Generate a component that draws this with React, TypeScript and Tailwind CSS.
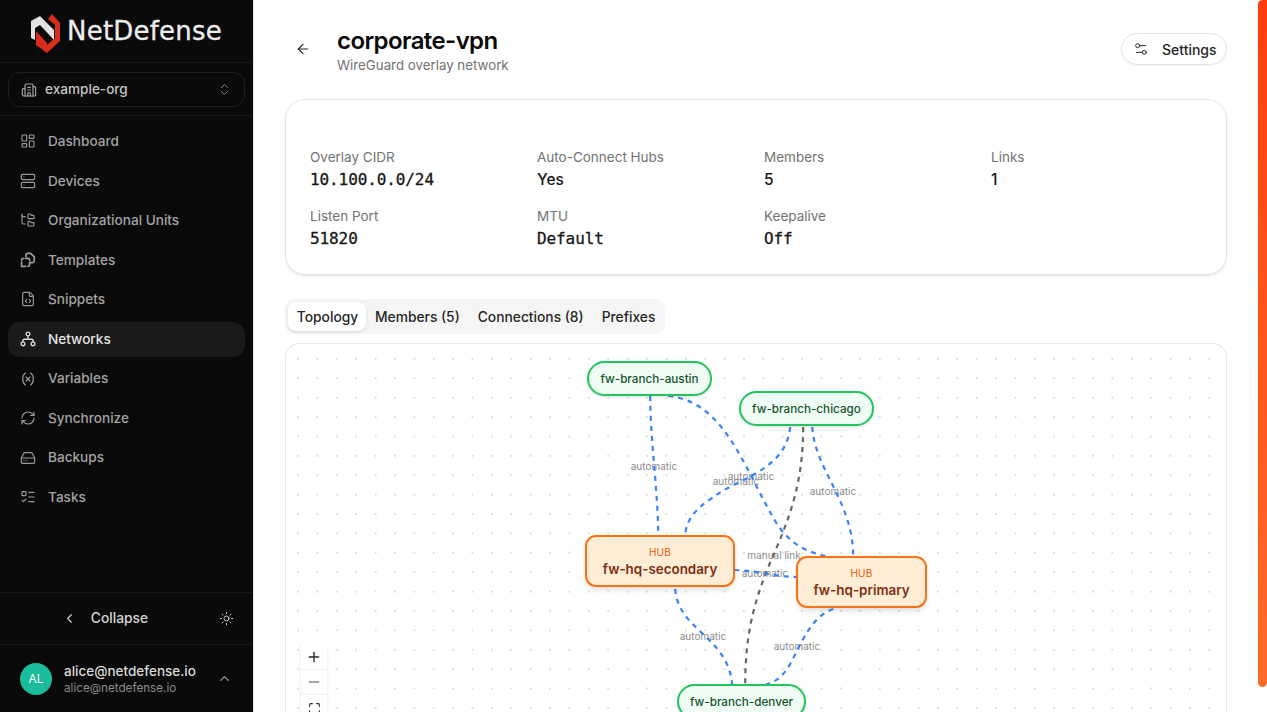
import React from "react";
import {
  ArrowLeft, Building2, ChevronLeft, ChevronUp, ChevronsUpDown, FileCode, FolderTree, HardDrive,
  LayoutDashboard, ListTodo, Maximize, Minus, Plus, RefreshCw, Server, Settings2, Sun, Variable,
} from "lucide-react";

function TemplatesIcon({ size, strokeWidth, className }: { size: number; strokeWidth: number; className?: string }) {
  return (
    <svg width={size} height={size} viewBox="0 0 16 16" fill="none" stroke="currentColor" strokeWidth={strokeWidth} strokeLinecap="round" strokeLinejoin="round" className={className}>
      <path d="M6 4.5V3a1.6 1.6 0 0 1 1.6-1.6h3l3.6 3.4V9a1.6 1.6 0 0 1-1.6 1.6h-2" />
      <path d="M1.6 8A1.6 1.6 0 0 1 3.2 6.4M5.2 6.4H8a1.6 1.6 0 0 1 1.6 1.6M9.6 10v2.8a1.6 1.6 0 0 1-1.6 1.6M1.6 10v4.4h4" />
    </svg>
  );
}

function NetworkIcon({ size, className }: { size: number; strokeWidth: number; className?: string }) {
  return (
    <svg width={size} height={size} viewBox="0 0 16 16" fill="none" stroke="currentColor" strokeWidth={1.4} strokeLinecap="round" strokeLinejoin="round" className={className}>
      <circle cx="8" cy="3" r="1.9" />
      <circle cx="3" cy="12.8" r="1.9" />
      <circle cx="13" cy="12.8" r="1.9" />
      <path d="M8 5v3.2M3 10.9V9.4c0-.7.5-1.2 1.2-1.2h7.6c.7 0 1.2.5 1.2 1.2v1.5" />
    </svg>
  );
}

const nav = [
  ["Dashboard", LayoutDashboard],
  ["Devices", Server],
  ["Organizational Units", FolderTree],
  ["Templates", TemplatesIcon],
  ["Snippets", FileCode],
  ["Networks", NetworkIcon],
  ["Variables", Variable],
  ["Synchronize", RefreshCw],
  ["Backups", HardDrive],
  ["Tasks", ListTodo],
] as const;

const edges = [
  ["M365 52C365 97 373 147 373 193", "#3b82f6"],
  ["M383 52C440 57 460 127 490 177C505 202 525 210 550 214", "#3b82f6"],
  ["M505 83C501 127 450 135 427 154C410 165 400 177 400 193", "#3b82f6"],
  ["M518 83C518 137 505 172 490 207C470 252 460 287 460 341", "#666666"],
  ["M527 83C530 127 568 157 568 213", "#3b82f6"],
  ["M449 226C475 227 490 233 512 233", "#3b82f6"],
  ["M390 245C393 287 443 292 447 341", "#3b82f6"],
  ["M548 265C527 272 517 297 505 320C497 334 487 341 473 342", "#3b82f6"],
];

const labels = [
  ["automatic", 369, 123], ["automatic", 466, 133], ["automatic", 451, 138], ["automatic", 548, 148],
  ["manual link", 489, 212], ["automatic", 480, 230], ["automatic", 418, 293], ["automatic", 512, 303],
] as const;

function Spoke({ name, left, top, width }: { name: string; left: string; top: string; width: string }) {
  return (
    <div className={`absolute ${left} ${top} ${width} h-[35px] pt-[2px] rounded-[18px] border-2 border-[#22c55e] bg-[#f0fdf4] flex items-center justify-center text-[11.7px] font-medium text-[#14532d] shadow-sm`}>
      {name}
    </div>
  );
}

function Hub({ name, left, top, width }: { name: string; left: string; top: string; width: string }) {
  return (
    <div className={`absolute ${left} ${top} ${width} h-[52px] pb-[1px] rounded-[11px] border-2 border-[#f97316] bg-[#ffedd5] flex flex-col items-center justify-center shadow-md`}>
      <span className="text-[10px] leading-[16px] text-[#ea580c] tracking-wide">HUB</span>
      <span className="text-[13.4px] leading-[18px] font-semibold text-[#7c2d12]">{name}</span>
    </div>
  );
}

function Stat({ label, value, mono }: { label: string; value: string; mono?: boolean }) {
  return (
    <div className="h-[44px]">
      <div className="text-[13.5px] leading-[20px] text-[#737373]">{label}</div>
      <div className={mono
        ? "text-[16px] leading-[26px] font-normal text-[#171717] [font-family:'DejaVu_Sans_Mono',monospace] tracking-[-0.1px] [-webkit-text-stroke:0.3px_#171717]"
        : "text-[15.5px] leading-[26px] font-medium text-[#171717]"}>{value}</div>
    </div>
  );
}

export default function App() {
  return (
    <div className="relative flex h-[712px] w-[1267px] overflow-hidden bg-white [font-family:Inter,sans-serif]">
      <aside className="flex h-full w-[254px] shrink-0 flex-col bg-[#0a0a0a] border-r border-[#e5e5e5]">
        <div className="flex h-[63px] shrink-0 items-center justify-center gap-[5px] border-b border-[#171717]">
          <svg width="31" height="39" viewBox="0 0 31 39" fill="none" className="mt-[4px]">
            <path d="M0 7 9 2 23 16V26L9 11 4 14V26L0 24Z" fill="#e2e2e2" />
            <path d="M5 17 16 29V31L24 24V11L17 5 21 0 29 9V27L16 39 5 31Z" fill="#d92d1c" />
          </svg>
          <span className="text-[26px] leading-none font-normal tracking-[0.2px] text-[#ededed] [font-family:'DejaVu_Sans',sans-serif] [-webkit-text-stroke:0.3px_#ededed]">NetDefense</span>
        </div>
        <div className="shrink-0 border-b border-[#171717] px-2 pt-[9px] pb-[8px]">
          <div className="flex h-[35px] items-center rounded-[12px] border border-[#1f1f1f] pl-[12px] pr-[12px]">
            <Building2 size={16} strokeWidth={1.75} className="text-[#a3a3a3]" />
            <span className="ml-[8px] flex-1 text-[13.6px] font-medium text-[#c4c4c4]">example-org</span>
            <ChevronsUpDown size={15} strokeWidth={1.5} className="text-[#8a8a8a]" />
          </div>
        </div>
        <nav className="flex flex-1 flex-col gap-[4.55px] px-2 pt-[7.8px]">
          {nav.map(([name, Icon]) => {
            const active = name === "Networks";
            return (
              <div key={name} className={`flex h-[35px] items-center gap-[12px] rounded-[12px] pl-[12px] text-[13.6px] font-medium ${active ? "bg-[#1a1a1a] text-[#e5e5e5]" : "text-[#a3a3a3]"}`}>
                <Icon size={16} strokeWidth={1.75} className={active ? "text-[#d4d4d4]" : "text-[#9a9a9a]"} />
                <span>{name}</span>
              </div>
            );
          })}
        </nav>
        <div className="relative flex h-[53px] shrink-0 items-center justify-center border-y border-[#171717] pr-[43px] text-[13.8px] font-medium text-[#d4d4d4]">
          <ChevronLeft size={15} strokeWidth={1.75} className="mr-[14px]" />
          <span>Collapse</span>
          <Sun size={15} strokeWidth={1.5} className="absolute right-[19px] top-[18px]" />
        </div>
        <div className="flex h-[67px] shrink-0 items-center pl-[20px] pr-[21px]">
          <div className="flex h-[32px] w-[32px] items-center justify-center rounded-full bg-[#1abc9c] text-[12px] text-white">AL</div>
          <div className="ml-[12px] flex-1">
            <div className="text-[13.5px] leading-[18px] font-medium text-[#d9d9d9]">alice@netdefense.io</div>
            <div className="text-[11.7px] leading-[16px] text-[#8a8a8a]">alice@netdefense.io</div>
          </div>
          <ChevronUp size={15} strokeWidth={1.75} className="text-[#a3a3a3]" />
        </div>
      </aside>

      <main className="flex min-w-0 flex-1 flex-col overflow-hidden pl-[31px] pr-[40px]">
        <header className="flex h-[99px] shrink-0 items-start">
          <ArrowLeft size={16} strokeWidth={1.75} className="ml-[10px] mt-[41px] text-[#262626]" />
          <div className="ml-[26px] mt-[26px]">
            <div className="text-[24px] leading-[29px] font-semibold tracking-[-0.6px] text-[#0a0a0a]">corporate-vpn</div>
            <div className="text-[13.3px] leading-[20px] text-[#737373]">WireGuard overlay network</div>
          </div>
          <div className="ml-auto mt-[33px] flex h-[32px] w-[106px] items-center rounded-full border border-[#e5e5e5] bg-white pl-[11px] text-[14px] font-medium text-[#262626] shadow-xs">
            <Settings2 size={16} strokeWidth={1.5} />
            <span className="ml-[13px]">Settings</span>
          </div>
        </header>

        <section className="h-[176px] shrink-0 rounded-[20px] border border-[#e5e5e5] px-[24px] pt-[47px] shadow-sm">
          <div className="grid grid-cols-4 gap-x-4 gap-y-[15px]">
            <Stat label="Overlay CIDR" value="10.100.0.0/24" mono />
            <Stat label="Auto-Connect Hubs" value="Yes" />
            <Stat label="Members" value="5" />
            <Stat label="Links" value="1" />
            <Stat label="Listen Port" value="51820" mono />
            <Stat label="MTU" value="Default" mono />
            <Stat label="Keepalive" value="Off" mono />
          </div>
        </section>

        <div className="mt-[24px] flex h-[35px] w-[380px] shrink-0 items-center whitespace-nowrap rounded-[10px] bg-[#f5f5f5] pl-[3px] pt-[1px] text-[13.8px] font-medium text-[#262626]">
          <div className="-mt-[1px] flex h-[29px] w-[78px] items-center justify-center rounded-[8px] bg-white pl-[1px] pt-[1px] shadow-sm">Topology</div>
          <div className="px-[9px]">Members (5)</div>
          <div className="px-[9px]">Connections (8)</div>
          <div className="px-[9px]">Prefixes</div>
        </div>

        <section className="relative mt-[9px] h-[500px] shrink-0 overflow-hidden rounded-[14px] border border-[#e5e5e5] bg-white bg-[radial-gradient(#dedede_0.7px,transparent_1px)] bg-[size:19.4px_19.4px] bg-[position:2.3px_5.2px]">
          <svg className="absolute inset-0" width="942" height="500" fill="none">
            {labels.map(([t, x, y], i) => (
              <text key={i} x={x - 1} y={y + 3} textAnchor="middle" fontSize="10" fill="#8c8c8c" fontFamily="Inter, sans-serif">{t}</text>
            ))}
            <g transform="translate(-0.8 0)">
              {edges.map(([d, c], i) => (
                <path key={i} d={d} stroke={c} strokeWidth="2.2" strokeDasharray="5 5" />
              ))}
            </g>
          </svg>
          <Spoke name="fw-branch-austin" left="left-[301px]" top="top-[17px]" width="w-[125px]" />
          <Spoke name="fw-branch-chicago" left="left-[453px]" top="top-[47px]" width="w-[135px]" />
          <Hub name="fw-hq-secondary" left="left-[299px]" top="top-[191px]" width="w-[150px]" />
          <Hub name="fw-hq-primary" left="left-[510px]" top="top-[212px]" width="w-[131px]" />
          <Spoke name="fw-branch-denver" left="left-[391px]" top="top-[340px]" width="w-[129px]" />
          <div className="absolute left-[15px] top-[300px] flex w-[26px] flex-col bg-white text-[#262626] shadow-sm">
            <div className="flex h-[26px] items-center justify-center border-b border-[#f0f0f0]"><Plus size={16} strokeWidth={2} /></div>
            <div className="flex h-[25px] items-center justify-center border-b border-[#f0f0f0]"><Minus size={16} strokeWidth={1.75} className="text-[#525252]" /></div>
            <div className="flex h-[26px] items-center justify-center"><Maximize size={13} strokeWidth={2} /></div>
          </div>
        </section>
      </main>

      <div className="absolute right-0 top-0 h-[687px] w-[9px] rounded-l-full rounded-br-full bg-gradient-to-b from-[#ff3d0a] to-[#ff6a2b]" />
    </div>
  );
}
